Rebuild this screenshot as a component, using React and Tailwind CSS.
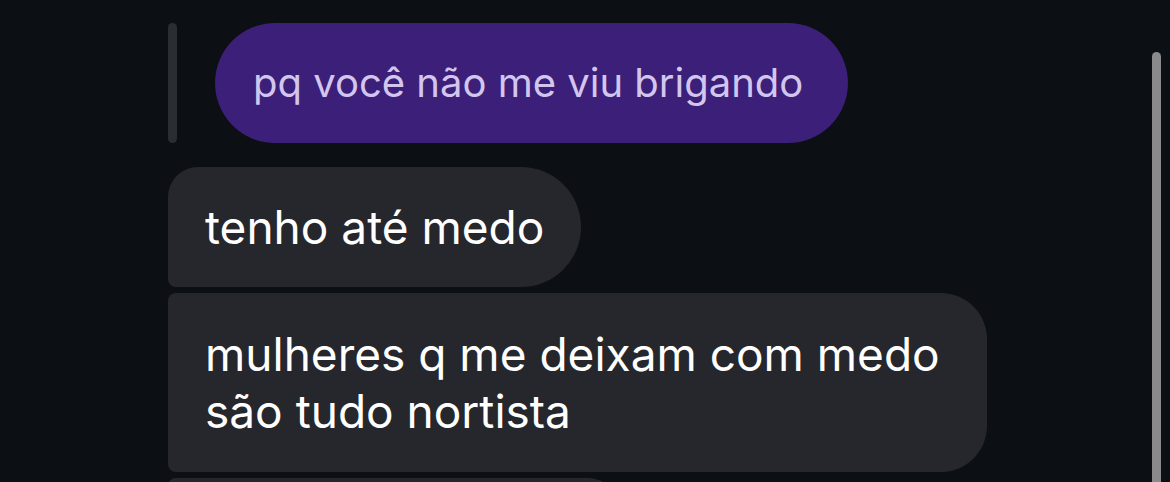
import React from "react";

const font = { fontFamily: "Inter, 'Noto Sans', sans-serif" };

const App = () => {
  return (
    <div
      className="w-[1170px] h-[482px] overflow-hidden bg-[#0c0f13] relative"
      style={font}
    >
      <div className="pl-[168px] pt-[23px] flex flex-col items-start">
        {/* quoted reply */}
        <div className="flex items-stretch gap-[38px]">
          <div className="w-[9px] rounded-full bg-[#2a2d32]" />
          <div className="h-[120px] rounded-full bg-[#3b1f78] pl-[38px] pr-[45px] flex items-center">
            <span className="text-[40px] text-[#d3c6ee]">
              pq você não me viu brigando
            </span>
          </div>
        </div>

        <div className="mt-[24px] h-[120px] bg-[#25272c] rounded-tl-[30px] rounded-tr-[60px] rounded-br-[60px] rounded-bl-[8px] px-[37px] flex items-center">
          <span className="text-[46px] text-white">tenho até medo</span>
        </div>

        <div className="mt-[6px] w-[819px] h-[179px] bg-[#25272c] rounded-tl-[8px] rounded-tr-[46px] rounded-br-[46px] rounded-bl-[8px] pl-[37px] pr-[30px] flex items-center">
          <p className="text-[46px] leading-[57px] text-white">
            mulheres q me deixam com medo
            <br />
            são tudo nortista
          </p>
        </div>

        <div className="mt-[6px] w-[450px] h-[60px] bg-[#25272c] rounded-tl-[8px] rounded-tr-[30px]" />
      </div>

      {/* scrollbar */}
      <div className="absolute left-[1152px] top-[52px] w-[9px] h-[460px] rounded-full bg-[#8a8a8d]" />
    </div>
  );
};

export default App;
